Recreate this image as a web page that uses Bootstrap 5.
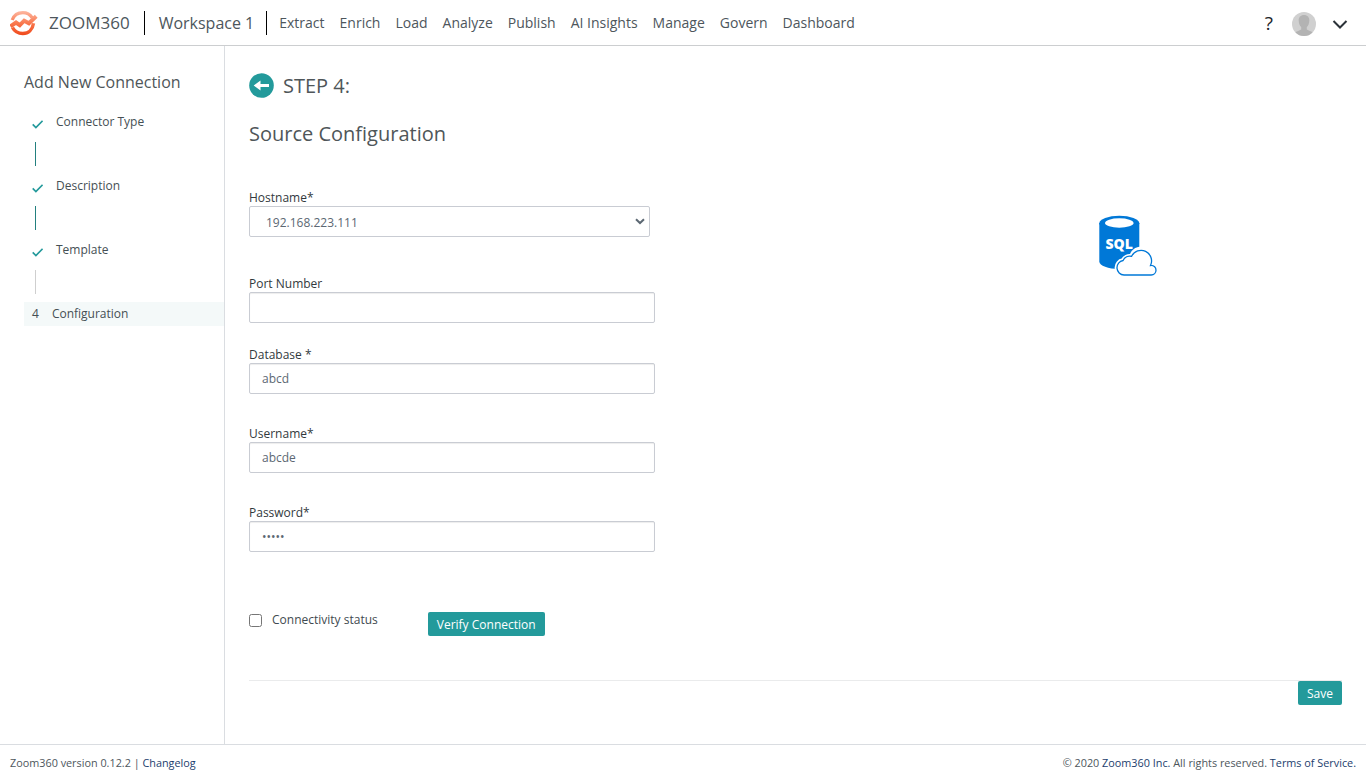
<!DOCTYPE html>
<html lang="en">
<head>
<meta charset="utf-8">
<meta name="viewport" content="width=device-width, initial-scale=1">
<title>Zoom360 - Add New Connection</title>
<link href="https://cdn.jsdelivr.net/npm/bootstrap@5.3.0/dist/css/bootstrap.min.css" rel="stylesheet">
<style>
  body { font-family: "Open Sans", "Noto Sans", sans-serif; font-size: 12px; line-height: 18px; color: #3f4a50; }
  a { text-decoration: none; }
  svg { display: block; flex: none; }
  .topbar { height: 46px; border-bottom: 1px solid #ccced0; padding: 0 18px 0 10px; color: #4d565c; }
  .brand-name { font-size: 17px; margin-left: 11px; line-height: 24px; }
  .space-name { font-size: 16px; margin-left: 14px; line-height: 24px; }
  .bar-sep { width: 1px; height: 24px; background: #000; }
  .sep-brand { margin-left: 14px; }
  .sep-space { margin-left: 12px; }
  .main-menu { font-size: 14px; gap: 15px; margin-left: 12px; }
  .main-menu .nav-link { padding: 0; color: #4d565c; line-height: 20px; }
  .help-mark { font-size: 19px; color: #212529; line-height: 24px; }
  .avatar { margin: 2px 16px 0 19px; }
  .side { width: 225px; border-right: 1px solid #dadde1; padding: 24px 0 0 24px; }
  .side-title { font-size: 16px; line-height: 24px; margin: 0 0 16px; font-weight: 400; color: #4f5659; }
  .step { height: 24px; line-height: 24px; padding-left: 8px; color: #454f54; }
  .step-name { margin-left: 13px; }
  .step-line { width: 1px; height: 24px; margin: 8px 0 8px 11px; background: #23807f; }
  .step-line.pending { background: #cfcfcf; }
  .step-now { background: #f4f9f9; }
  .content { padding: 27px 24px 0; }
  .title-text { font-size: 20px; line-height: 24px; font-weight: 400; margin: 0; color: #4f5659; }
  .step-title { margin-left: 9px; }
  .form-area { width: 406px; margin-top: 43px; }
  .form-label { height: 17px; line-height: 18px; margin: 0; display: block; color: #32393d; }
  .grp-port { margin-top: 38px; }
  .grp-db { margin-top: 23px; }
  .grp-cred { margin-top: 31px; }
  .field { height: 31px; border: 1px solid #c9ccd3; border-radius: 2px; padding: 0 12px; font-size: 12px; line-height: 29px; color: #5c6873; box-shadow: inset 0 1px 1px rgba(0,0,0,.075); }
  .host-pick { width: 401px; padding: 0 4px 0 16px; box-shadow: none; }
  .host-pick span { padding-top: 2px; }
  .sql-logo { margin: 69px 0 0 443px; }
  .btn-teal { --bs-btn-color: #fff; --bs-btn-bg: #239a9b; --bs-btn-hover-bg: #1d8586; --bs-btn-hover-color: #fff; height: 24px; border: 0; border-radius: 2px; padding: 1px 9px 0; font-size: 12px; line-height: 24px; font-weight: 400; }
  .status-row { margin-top: 60px; }
  .tick-box { width: 13px; height: 13px; margin-top: 2px; border: 1px solid #767676; border-radius: 2.5px; background: #fff; }
  .tick-label { margin: -1px 50px 0 10px; }
  .rule { border-top: 1px solid #eaebec; margin-top: 44px; }
  .foot { height: 36px; border-top: 1px solid #dadde1; padding: 0 10px; font-size: 10.84px; color: #4d565c; }
  .foot a { color: #1b3d6d; }
</style>
</head>
<body class="vh-100 d-flex flex-column overflow-hidden bg-white">
<header class="topbar d-flex align-items-center flex-shrink-0">
  <svg width="28" height="26" viewBox="0 0 28 26">
    <defs><linearGradient id="flame" x1="0" y1="1" x2="0" y2="25" gradientUnits="userSpaceOnUse"><stop offset="0" stop-color="#fdb8a2"/><stop offset=".5" stop-color="#f9794f"/><stop offset="1" stop-color="#f04a1c"/></linearGradient></defs>
    <g fill="none" stroke="url(#flame)">
      <path d="M2.200 10C3.900 5.400 7.900 2.600 12.800 2.600c4.100 0 7.400 1.900 9.300 5" stroke-width="3.200"/>
      <path d="M2.500 17.500c2.100 4 5.800 6 10.300 6 5.600 0 9.800-3.800 10.700-10.300" stroke-width="3.400"/>
      <path d="M.4 16.400 6 12.500l3.800 2.700 4.400-4.500 4.700 2.500 7.300-7" stroke-width="4"/>
    </g>
  </svg>
  <span class="brand-name">ZOOM360</span>
  <span class="bar-sep sep-brand"></span>
  <span class="space-name">Workspace 1</span>
  <span class="bar-sep sep-space"></span>
  <nav class="nav main-menu flex-nowrap text-nowrap">
    <a class="nav-link" href="#">Extract</a>
    <a class="nav-link" href="#">Enrich</a>
    <a class="nav-link" href="#">Load</a>
    <a class="nav-link" href="#">Analyze</a>
    <a class="nav-link" href="#">Publish</a>
    <a class="nav-link" href="#">AI Insights</a>
    <a class="nav-link" href="#">Manage</a>
    <a class="nav-link" href="#">Govern</a>
    <a class="nav-link" href="#">Dashboard</a>
  </nav>
  <div class="ms-auto d-flex align-items-center">
    <span class="help-mark">?</span>
    <svg class="avatar" width="24" height="24" viewBox="0 0 24 24">
      <clipPath id="disc"><circle cx="12" cy="12" r="12"/></clipPath>
      <g clip-path="url(#disc)"><path fill="#d0d0d0" d="M0 0h24v24H0z"/><path fill="#b3b3b3" d="M12 3c-3.500 0-5.500 2.200-5.300 5.800.1 3 1 5 2.500 6.200v2.500c-2 1.300-4.200 1.500-5.700 2.700V24h17v-3.800c-1.500-1.200-3.700-1.400-5.700-2.700V15c1.500-1.200 2.400-3.200 2.500-6.200C17.500 5.200 15.500 3 12 3z"/></g>
    </svg>
    <svg class="mt-1" width="16" height="10" viewBox="0 0 16 10"><path d="M1.500 1 8 7.500 14.500 1" fill="none" stroke="#2b3238" stroke-width="2"/></svg>
  </div>
</header>

<div class="d-flex flex-grow-1">
  <aside class="side flex-shrink-0">
    <h1 class="side-title">Add New Connection</h1>
    <div class="step d-flex"><svg class="mt-2" width="11" height="14" viewBox="0 0 11 14"><path d="M.7 6.300 3.900 9.500 10.600 2.800" fill="none" stroke="#23999b" stroke-width="1.700"/></svg><span class="step-name">Connector Type</span></div>
    <div class="step-line"></div>
    <div class="step d-flex"><svg class="mt-2" width="11" height="14" viewBox="0 0 11 14"><path d="M.7 6.300 3.900 9.500 10.600 2.800" fill="none" stroke="#23999b" stroke-width="1.700"/></svg><span class="step-name">Description</span></div>
    <div class="step-line"></div>
    <div class="step d-flex"><svg class="mt-2" width="11" height="14" viewBox="0 0 11 14"><path d="M.7 6.300 3.900 9.500 10.600 2.800" fill="none" stroke="#23999b" stroke-width="1.700"/></svg><span class="step-name">Template</span></div>
    <div class="step-line pending"></div>
    <div class="step step-now d-flex"><span>4</span><span class="step-name">Configuration</span></div>
  </aside>

  <main class="content flex-grow-1">
    <div class="d-flex align-items-center">
      <svg width="25" height="25" viewBox="0 0 25 25"><circle cx="12.500" cy="12.500" r="12.300" fill="#239a9b"/><path fill="#fff" d="M4.700 12.500 11.500 7.500v3.500h8.500v3H11.500v3.500z"/></svg>
      <h2 class="title-text step-title">STEP 4:</h2>
    </div>
    <h2 class="title-text mt-4">Source Configuration</h2>
    <div class="d-flex">
      <form class="form-area flex-shrink-0">
        <div>
          <label class="form-label">Hostname*</label>
          <div class="field host-pick d-flex align-items-center justify-content-between"><span>192.168.223.111</span>
            <svg width="10" height="7" viewBox="0 0 10 7"><path d="M1 1.200 5 5l4-3.800" fill="none" stroke="#5c6873" stroke-width="2"/></svg></div>
        </div>
        <div class="grp-port"><label class="form-label">Port Number</label><div class="field"></div></div>
        <div class="grp-db"><label class="form-label">Database *</label><div class="field">abcd</div></div>
        <div class="grp-cred"><label class="form-label">Username*</label><div class="field">abcde</div></div>
        <div class="grp-cred"><label class="form-label">Password*</label><div class="field">•••••</div></div>
      </form>
      <svg class="sql-logo" width="60" height="62" viewBox="0 0 60 62">
        <path fill="#0078d7" d="M1.300 8v38.500c0 4.300 9 7.500 20 7.500s20-3.200 20-7.500V8z"/>
        <ellipse cx="21.300" cy="8.300" rx="20" ry="7.500" fill="#0078d7"/>
        <ellipse cx="21.300" cy="8" rx="14.300" ry="4.700" fill="#fff"/>
        <path d="M25.500 60a7.500 7.500 0 0 1-.8-14.900 7.800 7.800 0 0 1 8.600-4.300 10.200 10.200 0 0 1 19.800 5.300c.3 1.500.2 2.800-.2 4.300 3.600-.2 5.400 2.300 5.400 4.800 0 2.700-2.100 4.800-4.800 4.800z" fill="#fff" stroke="#fff" stroke-width="3.500"/>
        <path d="M26 60a7.300 7.300 0 0 1-.9-14.500 7.600 7.600 0 0 1 8.500-4.200A10.200 10.200 0 0 1 52.500 50.500c3.700-.3 5.500 2.200 5.500 4.800 0 2.600-2.100 4.700-4.800 4.700z" fill="#fff" stroke="#0078d7" stroke-width="1.300"/>
        <text x="21.200" y="34" text-anchor="middle" font-family="Open Sans" font-weight="800" font-size="14" fill="#fff">SQL</text>
      </svg>
    </div>
    <div class="status-row d-flex">
      <span class="tick-box"></span><span class="tick-label">Connectivity status</span>
      <button type="button" class="btn btn-teal">Verify Connection</button>
    </div>
    <div class="rule d-flex justify-content-end"><button type="button" class="btn btn-teal">Save</button></div>
  </main>
</div>

<footer class="foot d-flex align-items-center justify-content-between flex-shrink-0">
  <span>Zoom360 version 0.12.2 | <a href="#">Changelog</a></span>
  <span>© 2020 <a href="#">Zoom360 Inc.</a> All rights reserved. <a href="#">Terms of Service.</a></span>
</footer>
<script src="https://cdn.jsdelivr.net/npm/bootstrap@5.3.0/dist/js/bootstrap.bundle.min.js"></script>
</body>
</html>
